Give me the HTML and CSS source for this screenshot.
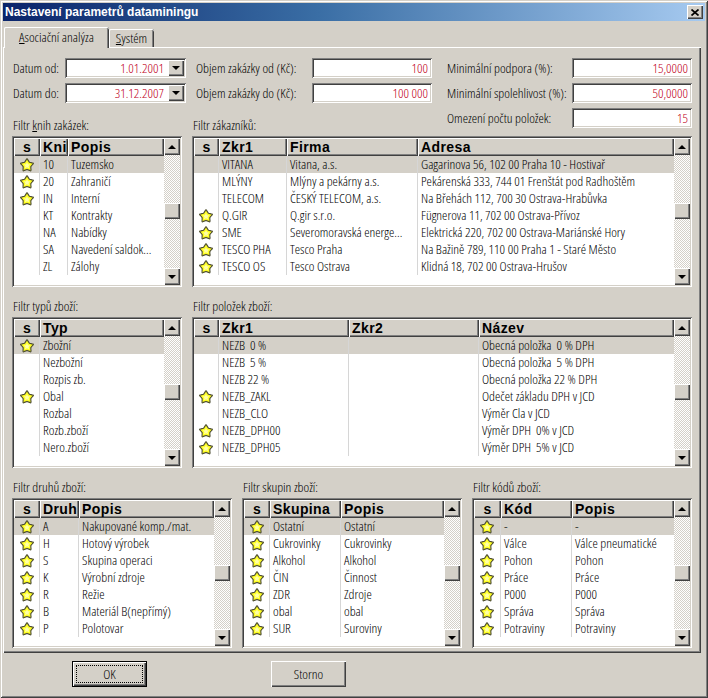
FILE: index.html
```html
<!DOCTYPE html>
<html lang="cs">
<head>
<meta charset="utf-8">
<title>Nastavení parametrů dataminingu</title>
<link rel="stylesheet" href="styles.css">
</head>
<body>
<svg class="defs" width="0" height="0" aria-hidden="true">
  <symbol id="star" viewBox="0 0 16 16">
    <path d="M7.18 2.85 Q8 0.6 8.82 2.85 L10.35 5.16 L13.03 5.9 Q15.6 6.1 13.54 7.47 L11.8 9.64 L11.93 12.41 Q12.4 14.9 10.6 13.38 L8 12.4 L5.4 13.38 Q3.6 14.9 4.07 12.41 L4.2 9.64 L2.46 7.47 Q0.4 6.1 2.97 5.9 L5.65 5.16 Z" fill="#ffff22" stroke="#4a4a30" stroke-width="1.1" stroke-linejoin="round"/>
    <path d="M8 5 L9 7.2 L11.2 7.6 L9.6 9.1 L10 11.2 L8 10.2 L6 11.2 L6.4 9.1 L4.8 7.6 L7 7.2 Z" fill="#ffffa8"/>
  </symbol>
</svg>
<div class="window">
  <div class="titlebar">
    <span class="title">Nastavení parametrů dataminingu</span>
    <span class="closebtn"><svg width="8" height="7" viewBox="0 0 8 7"><path d="M0.5 0.5 L7.5 6.5 M7.5 0.5 L0.5 6.5" stroke="#000" stroke-width="1.7"/></svg></span>
  </div>
  <div class="tabstrip">
    <div class="tab active"><u>A</u>sociační analýza</div>
    <div class="tab"><u>S</u>ystém</div>
  </div>
  <div class="page">
    <div class="form">
      <span class="lbl la">Datum od:</span>
      <span class="field combo"><span class="val">1.01.2001</span><span class="ddbtn"><i class="arr-down"></i></span></span>
      <span class="lbl lb">Objem zakázky od (Kč):</span>
      <span class="field"><span class="val">100</span></span>
      <span class="lbl lc">Minimální podpora (%):</span>
      <span class="field"><span class="val">15,0000</span></span>

      <span class="lbl la">Datum do:</span>
      <span class="field combo"><span class="val">31.12.2007</span><span class="ddbtn"><i class="arr-down"></i></span></span>
      <span class="lbl lb">Objem zakázky do (Kč):</span>
      <span class="field"><span class="val">100 000</span></span>
      <span class="lbl lc">Minimální spolehlivost (%):</span>
      <span class="field"><span class="val">50,0000</span></span>

      <span class="lbl lc r3">Omezení počtu položek:</span>
      <span class="field r3c"><span class="val">15</span></span>
    </div>

    <div class="sec-row first">
      <div class="panel w170">
        <div class="panel-label">Filtr <u>k</u>nih zakázek:</div>
        <div class="grid cols-knih">
          <div class="grid-main">
            <div class="grid-head"><span class="hc c">s</span><span class="hc">Knih</span><span class="hc">Popis</span></div>
            <div class="grid-row sel"><span class="cell st"><svg class="star"><use href="#star"/></svg></span><span class="cell">10</span><span class="cell">Tuzemsko</span></div>
            <div class="grid-row"><span class="cell st"><svg class="star"><use href="#star"/></svg></span><span class="cell">20</span><span class="cell">Zahraničí</span></div>
            <div class="grid-row"><span class="cell st"><svg class="star"><use href="#star"/></svg></span><span class="cell">IN</span><span class="cell">Interní</span></div>
            <div class="grid-row"><span class="cell st"></span><span class="cell">KT</span><span class="cell">Kontrakty</span></div>
            <div class="grid-row"><span class="cell st"></span><span class="cell">NA</span><span class="cell">Nabídky</span></div>
            <div class="grid-row"><span class="cell st"></span><span class="cell">SA</span><span class="cell">Navedení saldok...</span></div>
            <div class="grid-row"><span class="cell st"></span><span class="cell">ZL</span><span class="cell">Zálohy</span></div>
          </div>
          <div class="vscroll"><span class="sb-btn"><i class="arr-up"></i></span><span class="sb-track"><span class="sb-thumb"></span></span><span class="sb-btn"><i class="arr-down"></i></span></div>
        </div>
      </div>
      <div class="panel grow">
        <div class="panel-label">Filtr zákazníků:</div>
        <div class="grid cols-zak">
          <div class="grid-main">
            <div class="grid-head"><span class="hc c">s</span><span class="hc">Zkr1</span><span class="hc">Firma</span><span class="hc">Adresa</span></div>
            <div class="grid-row sel"><span class="cell st"></span><span class="cell">VITANA</span><span class="cell">Vitana, a.s.</span><span class="cell">Gagarinova 56, 102 00 Praha 10 - Hostivař</span></div>
            <div class="grid-row"><span class="cell st"></span><span class="cell">MLÝNY</span><span class="cell">Mlýny a pekárny a.s.</span><span class="cell">Pekárenská 333, 744 01 Frenštát pod Radhoštěm</span></div>
            <div class="grid-row"><span class="cell st"></span><span class="cell">TELECOM</span><span class="cell">ČESKÝ TELECOM, a.s.</span><span class="cell">Na Břehách 112, 700 30 Ostrava-Hrabůvka</span></div>
            <div class="grid-row"><span class="cell st"><svg class="star"><use href="#star"/></svg></span><span class="cell">Q.GIR</span><span class="cell">Q.gir s.r.o.</span><span class="cell">Fügnerova 11, 702 00 Ostrava-Přívoz</span></div>
            <div class="grid-row"><span class="cell st"><svg class="star"><use href="#star"/></svg></span><span class="cell">SME</span><span class="cell">Severomoravská energe...</span><span class="cell">Elektrická 220, 702 00 Ostrava-Mariánské Hory</span></div>
            <div class="grid-row"><span class="cell st"><svg class="star"><use href="#star"/></svg></span><span class="cell">TESCO PHA</span><span class="cell">Tesco Praha</span><span class="cell">Na Bažině 789, 110 00 Praha 1 - Staré Město</span></div>
            <div class="grid-row"><span class="cell st"><svg class="star"><use href="#star"/></svg></span><span class="cell">TESCO OS</span><span class="cell">Tesco Ostrava</span><span class="cell">Klidná 18, 702 00 Ostrava-Hrušov</span></div>
          </div>
          <div class="vscroll"><span class="sb-btn"><i class="arr-up"></i></span><span class="sb-track"><span class="sb-thumb"></span></span><span class="sb-btn"><i class="arr-down"></i></span></div>
        </div>
      </div>
    </div>

    <div class="sec-row">
      <div class="panel w170">
        <div class="panel-label">Filtr typů zboží:</div>
        <div class="grid cols-typ">
          <div class="grid-main">
            <div class="grid-head"><span class="hc c">s</span><span class="hc">Typ</span></div>
            <div class="grid-row sel"><span class="cell st"><svg class="star"><use href="#star"/></svg></span><span class="cell">Zbožní</span></div>
            <div class="grid-row"><span class="cell st"></span><span class="cell">Nezbožní</span></div>
            <div class="grid-row"><span class="cell st"></span><span class="cell">Rozpis zb.</span></div>
            <div class="grid-row"><span class="cell st"><svg class="star"><use href="#star"/></svg></span><span class="cell">Obal</span></div>
            <div class="grid-row"><span class="cell st"></span><span class="cell">Rozbal</span></div>
            <div class="grid-row"><span class="cell st"></span><span class="cell">Rozb.zboží</span></div>
            <div class="grid-row"><span class="cell st"></span><span class="cell">Nero.zboží</span></div>
          </div>
          <div class="vscroll"><span class="sb-btn"><i class="arr-up"></i></span><span class="sb-track"><span class="sb-thumb"></span></span><span class="sb-btn"><i class="arr-down"></i></span></div>
        </div>
      </div>
      <div class="panel grow">
        <div class="panel-label">Filtr položek zboží:</div>
        <div class="grid cols-pol">
          <div class="grid-main">
            <div class="grid-head"><span class="hc c">s</span><span class="hc">Zkr1</span><span class="hc">Zkr2</span><span class="hc">Název</span></div>
            <div class="grid-row sel"><span class="cell st"></span><span class="cell pre">NEZB  0 %</span><span class="cell"></span><span class="cell pre">Obecná položka  0 % DPH</span></div>
            <div class="grid-row"><span class="cell st"></span><span class="cell pre">NEZB  5 %</span><span class="cell"></span><span class="cell pre">Obecná položka  5 % DPH</span></div>
            <div class="grid-row"><span class="cell st"></span><span class="cell">NEZB 22 %</span><span class="cell"></span><span class="cell">Obecná položka 22 % DPH</span></div>
            <div class="grid-row"><span class="cell st"><svg class="star"><use href="#star"/></svg></span><span class="cell">NEZB_ZAKL</span><span class="cell"></span><span class="cell">Odečet základu DPH v JCD</span></div>
            <div class="grid-row"><span class="cell st"></span><span class="cell">NEZB_CLO</span><span class="cell"></span><span class="cell">Výměr Cla v JCD</span></div>
            <div class="grid-row"><span class="cell st"><svg class="star"><use href="#star"/></svg></span><span class="cell">NEZB_DPH00</span><span class="cell"></span><span class="cell pre">Výměr DPH  0% v JCD</span></div>
            <div class="grid-row"><span class="cell st"><svg class="star"><use href="#star"/></svg></span><span class="cell">NEZB_DPH05</span><span class="cell"></span><span class="cell pre">Výměr DPH  5% v JCD</span></div>
          </div>
          <div class="vscroll"><span class="sb-btn"><i class="arr-up"></i></span><span class="sb-track"><span class="sb-thumb"></span></span><span class="sb-btn"><i class="arr-down"></i></span></div>
        </div>
      </div>
    </div>

    <div class="sec-row last">
      <div class="panel grow">
        <div class="panel-label">Filtr druhů zboží:</div>
        <div class="grid cols-druh">
          <div class="grid-main">
            <div class="grid-head"><span class="hc c">s</span><span class="hc">Druh</span><span class="hc">Popis</span></div>
            <div class="grid-row sel"><span class="cell st"><svg class="star"><use href="#star"/></svg></span><span class="cell">A</span><span class="cell">Nakupované komp./mat.</span></div>
            <div class="grid-row"><span class="cell st"><svg class="star"><use href="#star"/></svg></span><span class="cell">H</span><span class="cell">Hotový výrobek</span></div>
            <div class="grid-row"><span class="cell st"><svg class="star"><use href="#star"/></svg></span><span class="cell">S</span><span class="cell">Skupina operaci</span></div>
            <div class="grid-row"><span class="cell st"><svg class="star"><use href="#star"/></svg></span><span class="cell">K</span><span class="cell">Výrobní zdroje</span></div>
            <div class="grid-row"><span class="cell st"><svg class="star"><use href="#star"/></svg></span><span class="cell">R</span><span class="cell">Režie</span></div>
            <div class="grid-row"><span class="cell st"><svg class="star"><use href="#star"/></svg></span><span class="cell">B</span><span class="cell">Materiál B(nepřímý)</span></div>
            <div class="grid-row"><span class="cell st"><svg class="star"><use href="#star"/></svg></span><span class="cell">P</span><span class="cell">Polotovar</span></div>
          </div>
          <div class="vscroll"><span class="sb-btn"><i class="arr-up"></i></span><span class="sb-track"><span class="sb-thumb"></span></span><span class="sb-btn"><i class="arr-down"></i></span></div>
        </div>
      </div>
      <div class="panel grow">
        <div class="panel-label">Filtr skupin zboží:</div>
        <div class="grid cols-sk">
          <div class="grid-main">
            <div class="grid-head"><span class="hc c">s</span><span class="hc">Skupina</span><span class="hc">Popis</span></div>
            <div class="grid-row sel"><span class="cell st"><svg class="star"><use href="#star"/></svg></span><span class="cell">Ostatní</span><span class="cell">Ostatní</span></div>
            <div class="grid-row"><span class="cell st"><svg class="star"><use href="#star"/></svg></span><span class="cell">Cukrovinky</span><span class="cell">Cukrovinky</span></div>
            <div class="grid-row"><span class="cell st"><svg class="star"><use href="#star"/></svg></span><span class="cell">Alkohol</span><span class="cell">Alkohol</span></div>
            <div class="grid-row"><span class="cell st"><svg class="star"><use href="#star"/></svg></span><span class="cell">ČIN</span><span class="cell">Činnost</span></div>
            <div class="grid-row"><span class="cell st"><svg class="star"><use href="#star"/></svg></span><span class="cell">ZDR</span><span class="cell">Zdroje</span></div>
            <div class="grid-row"><span class="cell st"><svg class="star"><use href="#star"/></svg></span><span class="cell">obal</span><span class="cell">obal</span></div>
            <div class="grid-row"><span class="cell st"><svg class="star"><use href="#star"/></svg></span><span class="cell">SUR</span><span class="cell">Suroviny</span></div>
          </div>
          <div class="vscroll"><span class="sb-btn"><i class="arr-up"></i></span><span class="sb-track"><span class="sb-thumb"></span></span><span class="sb-btn"><i class="arr-down"></i></span></div>
        </div>
      </div>
      <div class="panel grow">
        <div class="panel-label">Filtr kódů zboží:</div>
        <div class="grid cols-kod">
          <div class="grid-main">
            <div class="grid-head"><span class="hc c">s</span><span class="hc">Kód</span><span class="hc">Popis</span></div>
            <div class="grid-row sel"><span class="cell st"><svg class="star"><use href="#star"/></svg></span><span class="cell">-</span><span class="cell">-</span></div>
            <div class="grid-row"><span class="cell st"><svg class="star"><use href="#star"/></svg></span><span class="cell">Válce</span><span class="cell">Válce pneumatické</span></div>
            <div class="grid-row"><span class="cell st"><svg class="star"><use href="#star"/></svg></span><span class="cell">Pohon</span><span class="cell">Pohon</span></div>
            <div class="grid-row"><span class="cell st"><svg class="star"><use href="#star"/></svg></span><span class="cell">Práce</span><span class="cell">Práce</span></div>
            <div class="grid-row"><span class="cell st"><svg class="star"><use href="#star"/></svg></span><span class="cell">P000</span><span class="cell">P000</span></div>
            <div class="grid-row"><span class="cell st"><svg class="star"><use href="#star"/></svg></span><span class="cell">Správa</span><span class="cell">Správa</span></div>
            <div class="grid-row"><span class="cell st"><svg class="star"><use href="#star"/></svg></span><span class="cell">Potraviny</span><span class="cell">Potraviny</span></div>
          </div>
          <div class="vscroll"><span class="sb-btn"><i class="arr-up"></i></span><span class="sb-track"><span class="sb-thumb"></span></span><span class="sb-btn"><i class="arr-down"></i></span></div>
        </div>
      </div>
    </div>
  </div>
  <div class="btn-row">
    <button class="btn default" type="button">OK</button>
    <button class="btn" type="button">Storno</button>
  </div>
</div>
</body>
</html>
```
FILE: styles.css
```css
* { box-sizing: border-box; }
html, body { margin: 0; padding: 0; }
body {
  width: 708px;
  height: 698px;
  overflow: hidden;
  background: #d4d0c8;
  font-family: "Open Sans", "Liberation Sans", sans-serif;
  font-stretch: 80%;
  font-weight: 360;
  font-size: 13.5px;
  color: #000;
}
.defs { position: absolute; width: 0; height: 0; overflow: hidden; }

.window {
  width: 708px;
  height: 698px;
  padding: 3px;
  background: #d4d0c8;
  box-shadow: inset 1px 1px #d4d0c8, inset -1px -1px #404040, inset 2px 2px #ffffff, inset -2px -2px #808080;
  display: flex;
  flex-direction: column;
}

.titlebar {
  height: 18px;
  flex: none;
  display: flex;
  align-items: center;
  justify-content: space-between;
  padding: 0 2px 0 2px;
  background: linear-gradient(90deg, #0a246a 0%, #3a6ea5 45%, #a6caf0 100%);
}
.title {
  font-family: "Liberation Sans", Arial, sans-serif;
  font-stretch: 100%;
  font-weight: bold;
  font-size: 12px;
  color: #fff;
  white-space: nowrap;
}
.closebtn {
  width: 16px;
  height: 14px;
  background: #d4d0c8;
  display: flex;
  align-items: center;
  justify-content: center;
  box-shadow: inset 1px 1px #fff, inset -1px -1px #404040, inset -2px -2px #808080;
}

.tabstrip {
  margin-top: 6px;
  height: 20px;
  flex: none;
  display: flex;
  align-items: flex-end;
  padding-left: 1px;
  position: relative;
  z-index: 1;
}
.tab {
  height: 18px;
  line-height: 17px;
  padding-top: 1px;
  text-align: center;
  background: #d4d0c8;
  border-radius: 2px 2px 0 0;
  box-shadow: inset 1px 0 #fff, inset 0 1px #fff, inset -1px 0 #404040, inset -2px 0 #808080;
  width: 45px;
  white-space: nowrap;
}
.tab.active {
  width: 105px;
  height: 21px;
  margin-bottom: -1px;
  line-height: 18px;
  padding-top: 1px;
}

.page {
  flex: none;
  height: 606px;
  margin-right: 4px;
  padding: 11px 9px 7px 9px;
  box-shadow: inset 1px 1px #fff, inset -1px -1px #404040, inset -2px -2px #808080;
  display: flex;
  flex-direction: column;
}

.form {
  display: grid;
  grid-template-columns: 53px 121px 126px 120px 140px 120px;
  grid-auto-rows: 20px;
  row-gap: 5px;
}
.lbl { align-self: center; white-space: nowrap; line-height: 14px; }
.la { padding-left: 1px; }
.lb { padding-left: 10px; }
.lc { padding-left: 15px; }
.r3 { grid-row: 3; grid-column: 5; }
.r3c { grid-row: 3; grid-column: 6; }

.field {
  background: #fff;
  box-shadow: inset 1px 1px #808080, inset -1px -1px #fff, inset 2px 2px #404040, inset -2px -2px #d4d0c8;
  display: flex;
  align-items: center;
  padding: 2px 4px 2px 2px;
  color: #c0001c;
}
.field .val { flex: 1; text-align: right; line-height: 16px; white-space: nowrap; }
.field.combo { padding-right: 2px; }
.field.combo .val { padding-right: 4px; }
.ddbtn {
  width: 16px;
  height: 16px;
  background: #d4d0c8;
  box-shadow: inset 1px 1px #fff, inset -1px -1px #404040, inset -2px -2px #808080;
  display: flex;
  align-items: center;
  justify-content: center;
}

.arr-down, .arr-up {
  display: block;
  width: 0;
  height: 0;
  border-left: 4px solid transparent;
  border-right: 4px solid transparent;
}
.arr-down { border-top: 4px solid #000; }
.arr-up { border-bottom: 4px solid #000; }

.sec-row { display: flex; gap: 10px; }
.sec-row.first { margin-top: -10px; }
.sec-row + .sec-row { margin-top: 12px; }
.panel { display: flex; flex-direction: column; min-width: 0; }
.w170 { width: 170px; flex: none; }
.grow { flex: 1; }
.panel-label {
  height: 14px;
  line-height: 14px;
  margin-bottom: 4px;
  padding-left: 1px;
  white-space: nowrap;
}

.grid {
  height: 151px;
  display: flex;
  padding: 2px;
  background: #fff;
  box-shadow: inset 1px 1px #808080, inset -1px -1px #fff, inset 2px 2px #404040, inset -2px -2px #d4d0c8;
}
.sec-row.last .grid { height: 150px; }
.grid-main { flex: 1; min-width: 0; display: flex; flex-direction: column; overflow: hidden; }

.cols-knih { --cols: 26px 28px 1fr; }
.cols-zak { --cols: 25px 68px 131px 1fr; }
.cols-typ { --cols: 26px 1fr; }
.cols-pol { --cols: 25px 130px 130px 1fr; }
.cols-druh { --cols: 26px 39px 1fr; }
.cols-sk { --cols: 26px 71px 1fr; }
.cols-kod { --cols: 27px 71px 1fr; }

.grid-head, .grid-row {
  display: grid;
  grid-template-columns: var(--cols);
}
.grid-head { height: 18px; flex: none; }
.hc {
  height: 18px;
  line-height: 18px;
  background: #d4d0c8;
  box-shadow: inset 1px 1px #fff, inset -1px -1px #404040, inset -2px -2px #808080;
  font-family: "Liberation Sans", Arial, sans-serif;
  font-stretch: 100%;
  font-weight: bold;
  font-size: 14px;
  letter-spacing: 0.4px;
  padding-left: 3px;
  overflow: hidden;
  white-space: nowrap;
}
.hc.c { text-align: center; padding-left: 0; }

.grid-row { height: 17px; flex: none; }
.grid-row.sel { background: #d4d0c8; }
.cell {
  line-height: 17px;
  padding-left: 3px;
  white-space: nowrap;
  overflow: hidden;
  border-right: 1px solid #d6d6d6;
}
.cell:last-child { border-right: none; }
.cell.pre { white-space: pre; }
.cell.st {
  padding-left: 0;
  display: flex;
  align-items: center;
  justify-content: center;
}
.star { width: 16px; height: 16px; display: block; }

.vscroll {
  width: 16px;
  flex: none;
  display: flex;
  flex-direction: column;
  background: repeating-conic-gradient(#ffffff 0 25%, #d4d0c8 0 50%) 0 0 / 2px 2px;
}
.sb-btn {
  width: 16px;
  height: 17px;
  flex: none;
  background: #d4d0c8;
  box-shadow: inset 1px 1px #fff, inset -1px -1px #404040, inset -2px -2px #808080;
  display: flex;
  align-items: center;
  justify-content: center;
}
.sb-track { flex: 1; display: flex; flex-direction: column; }
.sb-thumb {
  width: 16px;
  height: 16px;
  margin-top: 48px;
  background: #d4d0c8;
  box-shadow: inset 1px 1px #fff, inset -1px -1px #404040, inset -2px -2px #808080;
}

.btn-row {
  flex: none;
  margin-top: 8px;
  display: flex;
  gap: 124px;
  padding-left: 69px;
}
.btn {
  width: 75px;
  height: 26px;
  padding: 0;
  border: none;
  background: #d4d0c8;
  font-family: inherit;
  font-stretch: inherit;
  font-weight: inherit;
  font-size: 13.5px;
  color: #000;
  box-shadow: inset 1px 1px #fff, inset -1px -1px #404040, inset -2px -2px #808080;
  position: relative;
}
.btn.default {
  box-shadow: inset 0 0 0 1px #000, inset 2px 2px #fff, inset -2px -2px #404040, inset -3px -3px #808080;
}
.btn.default::after {
  content: "";
  position: absolute;
  inset: 4px;
  border: 1px dotted #000;
}
```
